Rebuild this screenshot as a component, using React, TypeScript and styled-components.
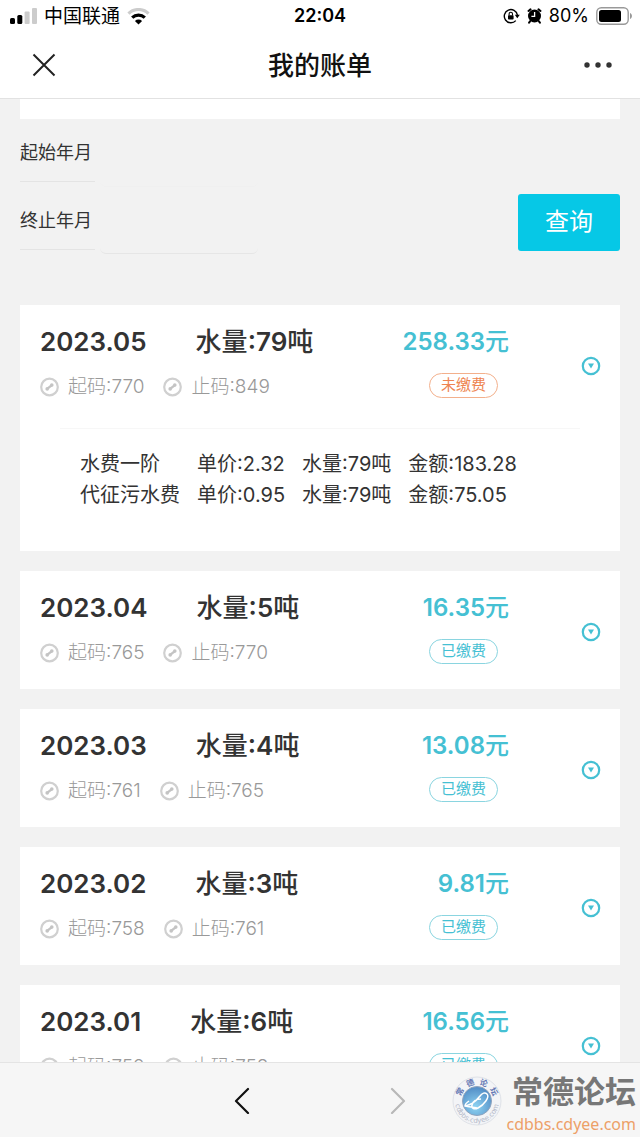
import React, { useState } from "react";
import styled, { createGlobalStyle } from "styled-components";

const GlobalStyle = createGlobalStyle`
  * { box-sizing: border-box; }
  body {
    margin: 0;
    background: #f2f2f2;
    color: #333;
    font-family: Inter, "Noto Sans CJK SC", sans-serif;
  }
  button, input { font: inherit; color: inherit; }
  button { margin: 0; padding: 0; border: 0; background: none; cursor: pointer; }
  svg { display: block; flex: none; }
`;

const Screen = styled.div`
  display: flex;
  flex-direction: column;
  height: 100vh;
`;

const StatusBar = styled.div`
  display: grid;
  grid-template-columns: 1fr auto 1fr;
  align-items: center;
  height: 32px;
  padding: 0 8px;
  background: #fff;
  color: #000;
`;

const StatusGroup = styled.div`
  display: flex;
  align-items: center;
  gap: 7px;
  padding-left: 2px;
`;

const StatusEnd = styled(StatusGroup)`
  justify-content: flex-end;
`;

const Carrier = styled.span`
  padding-top: 2px;
  font-size: 19px;
  line-height: 30px;
`;

const BatteryLevel = styled.span`
  font-size: 18px;
  line-height: 32px;
`;

const Clock = styled.time`
  font-size: 18px;
  font-weight: 600;
  line-height: 32px;
`;

const TitleBar = styled.header`
  display: grid;
  grid-template-columns: 1fr auto 1fr;
  align-items: center;
  height: 67px;
  padding: 0 28px;
  border-bottom: 1px solid #e2e2e2;
  background: #fff;
`;

const Title = styled.h1`
  margin: 0;
  padding-top: 2px;
  color: #111;
  font-size: 26px;
  font-weight: 500;
  line-height: 40px;
`;

const CloseButton = styled.button`
  justify-self: start;
  padding: 0 4px;
`;

const MoreButton = styled.button`
  justify-self: end;
`;

const Main = styled.main`
  flex: 1;
  min-height: 0;
  overflow: hidden;
  padding: 0 20px;
`;

const Strip = styled.div`
  height: 20px;
  background: #fff;
`;

const Query = styled.form`
  display: flex;
  align-items: flex-end;
  justify-content: space-between;
  margin-bottom: 50px;
`;

const Field = styled.div`
  display: flex;
  height: 68px;
`;

const FieldLabel = styled.label`
  width: 75px;
  height: 63px;
  margin-right: 5px;
  border-bottom: 1px solid #e4e4e4;
  font-size: 18px;
  line-height: 67px;
`;

const FieldInput = styled.input<{ $last?: boolean }>`
  width: 158px;
  height: ${(p) => (p.$last ? 67 : 68)}px;
  padding: 0 10px;
  border: 0;
  border-bottom: 1px solid ${(p) => (p.$last ? "#e6e6e6" : "#f0f0f0")};
  border-radius: 6px;
  background: #f2f2f2;
  font-size: 18px;
  outline: none;
`;

const QueryButton = styled.button`
  width: 102px;
  height: 57px;
  margin-bottom: 4px;
  padding-bottom: 6px;
  border-radius: 3px;
  background: #06c8e6;
  color: #fff;
  font-size: 24px;
`;

const BillList = styled.ul`
  display: flex;
  flex-direction: column;
  gap: 20px;
  margin: 0;
  padding: 0;
  list-style: none;
`;

const Card = styled.li`
  background: #fff;
`;

const Summary = styled.div`
  display: flex;
  height: 118px;
  padding: 17px 19px 0 20px;
`;

const Usage = styled.div`
  flex: 1;
`;

const Heading = styled.div`
  display: flex;
  gap: 49px;
  font-size: 26px;
  font-weight: 600;
  line-height: 40px;
`;

const Hanzi = styled.span`
  font-weight: 500;
`;

const Readings = styled.div`
  display: flex;
  gap: 19px;
  margin-top: 12px;
  color: #999;
  font-size: 19px;
  font-weight: 300;
  line-height: 26px;
`;

const Reading = styled.span`
  display: flex;
  align-items: center;
  gap: 8px;
`;

const Payment = styled.div`
  display: flex;
  flex-direction: column;
  align-items: flex-end;
  margin-right: 72px;
`;

const Amount = styled.strong`
  color: #45c0d3;
  font-size: 24px;
  font-weight: 600;
  line-height: 40px;
`;

const Badge = styled.span<{ $paid: boolean }>`
  height: 25px;
  margin: 11px 11px 0 0;
  padding: 0 11px;
  border: 1px solid ${(p) => (p.$paid ? "#8ad5e0" : "#f3b08c")};
  border-radius: 13px;
  color: ${(p) => (p.$paid ? "#45c0d3" : "#ee8450")};
  font-size: 15px;
  line-height: 22px;
`;

const Toggle = styled.button`
  align-self: center;
  margin-top: -14px;
`;

const Detail = styled.div`
  margin: 5px 40px 0;
  padding: 20px 20px 40px;
  border-top: 1px solid #f7f7f7;
`;

const DetailTable = styled.table`
  border-collapse: collapse;
  font-size: 20px;
  line-height: 31px;

  td {
    padding: 0 17px 0 0;
    white-space: nowrap;
  }
`;

const BottomBar = styled.footer`
  position: relative;
  display: flex;
  align-items: center;
  justify-content: center;
  gap: 140px;
  height: 75px;
  border-top: 1px solid #e4e4e4;
  background: #f6f6f6;
`;

const Watermark = styled.div`
  position: absolute;
  right: 4px;
  bottom: 2px;
  display: flex;
  align-items: center;
  gap: 5px;
`;

const WatermarkText = styled.div`
  display: flex;
  flex-direction: column;
  align-items: flex-end;
`;

const ForumName = styled.span`
  color: #777;
  font-family: "Noto Sans CJK SC", sans-serif;
  font-size: 31px;
  font-weight: 700;
  line-height: 46px;
`;

const ForumUrl = styled.span`
  color: #eda068;
  font-family: "Noto Sans", sans-serif;
  font-size: 16px;
  line-height: 22px;
`;

const SignalIcon = () => (
  <svg width="27" height="16" viewBox="0 0 27 16" aria-hidden="true">
    <rect x="0" y="10" width="5" height="6" rx="1.5" fill="#000" />
    <rect x="7.3" y="7" width="5" height="9" rx="1.5" fill="#000" />
    <rect x="14.6" y="3.5" width="5" height="12.5" rx="1" fill="#ccc" />
    <rect x="22" y="0" width="5" height="16" rx="1" fill="#ccc" />
  </svg>
);

const WifiIcon = () => (
  <svg width="23" height="17" viewBox="0 0 23 17" fill="none" aria-hidden="true">
    <path d="M1.5 5.6a14.3 14.3 0 0 1 20 0" stroke="#ccc" strokeWidth="3.2" />
    <path d="M5.2 9.7a9 9 0 0 1 12.6 0" stroke="#000" strokeWidth="3.2" />
    <path d="M11.5 16.6 7.9 12.9a5.2 5.2 0 0 1 7.2 0Z" fill="#000" />
  </svg>
);

const RotationLockIcon = () => (
  <svg width="17" height="16" viewBox="0 0 17 16" fill="none" aria-hidden="true">
    <path d="M12.8 12.6A6.6 6.6 0 1 1 14.4 7" stroke="#000" strokeWidth="1.4" />
    <path d="M11.8 6.8h5l-2.5 3.4Z" fill="#000" />
    <rect x="5" y="7.2" width="5.6" height="4.4" rx=".8" fill="#000" />
    <path d="M6.1 7.4V6a1.7 1.7 0 0 1 3.4 0v1.4" stroke="#000" strokeWidth="1.1" />
  </svg>
);

const AlarmIcon = () => (
  <svg width="15" height="16" viewBox="0 0 15 16" fill="none" aria-hidden="true">
    <circle cx="7.5" cy="8" r="6.5" fill="#000" />
    <path d="M1.5 3 3.5 1.4M13.5 3l-2-1.6M3 13.4l-.9 1.2M12 13.4l.9 1.2" stroke="#000" strokeWidth="2" strokeLinecap="round" />
    <path d="M7.6 4v4.4H4.4" stroke="#fff" strokeWidth="1.3" />
  </svg>
);

const BatteryIcon = () => (
  <svg width="36" height="18" viewBox="0 0 36 18" fill="none" aria-hidden="true">
    <rect x=".8" y=".8" width="31.4" height="16.4" rx="4.5" stroke="#999" strokeWidth="1.4" />
    <rect x="3" y="3" width="22" height="12" rx="2.5" fill="#000" />
    <path d="M34 6c2.6.8 2.6 5.2 0 6Z" fill="#999" />
  </svg>
);

const CloseIcon = () => (
  <svg width="24" height="24" viewBox="0 0 24 24" fill="none" aria-hidden="true">
    <path d="m1.5 1.5 21 21M22.5 1.5l-21 21" stroke="#222" strokeWidth="2" />
  </svg>
);

const MoreIcon = () => (
  <svg width="28" height="8" viewBox="0 0 28 8" fill="#333" aria-hidden="true">
    <circle cx="3" cy="4" r="2.7" />
    <circle cx="14" cy="4" r="2.7" />
    <circle cx="25" cy="4" r="2.7" />
  </svg>
);

const MeterIcon = () => (
  <svg width="20" height="20" viewBox="0 0 20 20" fill="none" aria-hidden="true">
    <circle cx="9.5" cy="10" r="8.3" stroke="#d0d0d0" strokeWidth="2.2" />
    <path d="m7.5 11.7 4-3.4" stroke="#c4c4c4" strokeWidth="2.4" />
    <circle cx="7.2" cy="11.9" r="1.8" fill="#c4c4c4" />
    <circle cx="11.8" cy="8.1" r="1.8" fill="#c4c4c4" />
  </svg>
);

const ExpandIcon = () => (
  <svg width="20" height="20" viewBox="0 0 20 20" fill="none" aria-hidden="true">
    <circle cx="10" cy="10" r="8.2" stroke="#45c0d3" strokeWidth="2.2" />
    <path d="M7 7.6h6l-3 5Z" fill="#45c0d3" />
  </svg>
);

const Chevron = ({ forward }: { forward?: boolean }) => (
  <svg width="16" height="28" viewBox="0 0 16 28" fill="none" aria-hidden="true">
    <path
      d={forward ? "m2 3 12 12L2 27" : "M14 3 2 15l12 12"}
      stroke={forward ? "#b8b8b8" : "#111"}
      strokeWidth="2.2"
      strokeLinecap="round"
      strokeLinejoin="round"
    />
  </svg>
);

const ForumSeal = () => (
  <svg width="50" height="50" viewBox="0 0 50 50" aria-hidden="true">
    <defs>
      <radialGradient id="globe" cx="45%" cy="70%" r="65%">
        <stop offset="0" stopColor="#8fd4f2" />
        <stop offset="1" stopColor="#5590c8" />
      </radialGradient>
      <path id="sealTop" d="M8.5 25a16.5 16.5 0 0 1 33 0" />
      <path id="sealBottom" d="M3 25a22 22 0 0 0 44 0" />
    </defs>
    <circle cx="25" cy="25" r="24" fill="#f3f4f7" stroke="#dfe2e8" />
    <circle cx="25" cy="25" r="14.5" fill="url(#globe)" stroke="#8fa3bd" />
    <path
      d="M13 30c4-1 9-2 15-10 2-3 5-4 7-2 3 3-3 11-9 14-4 2-7 0-6-3 1-4 5-6 9-6M17 25c-3 2-4 4-4 5 4 1 8 1 12 2"
      fill="none"
      stroke="#fff"
      strokeWidth="1.5"
    />
    <text fill="#6679b4" fontFamily="Noto Sans CJK SC, sans-serif" fontSize="8" fontWeight="700">
      <textPath href="#sealTop" startOffset="50%" textAnchor="middle">常&#160;&#160;德&#160;&#160;论&#160;&#160;坛</textPath>
    </text>
    <text fill="#b3b9c8" fontFamily="DejaVu Sans, sans-serif" fontSize="7">
      <textPath href="#sealBottom" startOffset="50%" textAnchor="middle">cdbbs.cdyee.com</textPath>
    </text>
  </svg>
);

type Charge = { name: string; price: string; volume: string; total: string };
type Bill = {
  month: string;
  volume: string;
  start: string;
  end: string;
  amount: string;
  paid: boolean;
  charges: Charge[];
};

const bills: Bill[] = [
  {
    month: "2023.05", volume: "79", start: "770", end: "849", amount: "258.33", paid: false,
    charges: [
      { name: "水费一阶", price: "2.32", volume: "79", total: "183.28" },
      { name: "代征污水费", price: "0.95", volume: "79", total: "75.05" },
    ],
  },
  { month: "2023.04", volume: "5", start: "765", end: "770", amount: "16.35", paid: true, charges: [] },
  { month: "2023.03", volume: "4", start: "761", end: "765", amount: "13.08", paid: true, charges: [] },
  { month: "2023.02", volume: "3", start: "758", end: "761", amount: "9.81", paid: true, charges: [] },
  { month: "2023.01", volume: "6", start: "752", end: "758", amount: "16.56", paid: true, charges: [] },
];

const BillCard = ({ bill }: { bill: Bill }) => {
  const [open, setOpen] = useState(bill.charges.length > 0);
  return (
    <Card>
      <Summary>
        <Usage>
          <Heading>
            <span>{bill.month}</span>
            <span><Hanzi>水量</Hanzi>:{bill.volume}<Hanzi>吨</Hanzi></span>
          </Heading>
          <Readings>
            <Reading><MeterIcon />起码:{bill.start}</Reading>
            <Reading><MeterIcon />止码:{bill.end}</Reading>
          </Readings>
        </Usage>
        <Payment>
          <Amount>{bill.amount}<Hanzi>元</Hanzi></Amount>
          <Badge $paid={bill.paid}>{bill.paid ? "已缴费" : "未缴费"}</Badge>
        </Payment>
        <Toggle type="button" aria-label="明细" aria-expanded={open} onClick={() => setOpen(!open)}>
          <ExpandIcon />
        </Toggle>
      </Summary>
      {open && bill.charges.length > 0 && (
        <Detail>
          <DetailTable>
            <tbody>
              {bill.charges.map((c) => (
                <tr key={c.name}>
                  <td>{c.name}</td>
                  <td>单价:{c.price}</td>
                  <td>水量:{c.volume}吨</td>
                  <td>金额:{c.total}</td>
                </tr>
              ))}
            </tbody>
          </DetailTable>
        </Detail>
      )}
    </Card>
  );
};

export default function App() {
  return (
    <Screen>
      <GlobalStyle />
      <StatusBar>
        <StatusGroup><SignalIcon /><Carrier>中国联通</Carrier><WifiIcon /></StatusGroup>
        <Clock>22:04</Clock>
        <StatusEnd><RotationLockIcon /><AlarmIcon /><BatteryLevel>80%</BatteryLevel><BatteryIcon /></StatusEnd>
      </StatusBar>
      <TitleBar>
        <CloseButton type="button" aria-label="关闭"><CloseIcon /></CloseButton>
        <Title>我的账单</Title>
        <MoreButton type="button" aria-label="更多"><MoreIcon /></MoreButton>
      </TitleBar>
      <Main>
        <Strip />
        <Query onSubmit={(e) => e.preventDefault()}>
          <div>
            <Field>
              <FieldLabel htmlFor="start">起始年月</FieldLabel>
              <FieldInput id="start" type="text" />
            </Field>
            <Field>
              <FieldLabel htmlFor="end">终止年月</FieldLabel>
              <FieldInput id="end" type="text" $last />
            </Field>
          </div>
          <QueryButton type="submit">查询</QueryButton>
        </Query>
        <BillList>
          {bills.map((b) => <BillCard key={b.month} bill={b} />)}
        </BillList>
      </Main>
      <BottomBar>
        <button type="button" aria-label="后退"><Chevron /></button>
        <button type="button" aria-label="前进"><Chevron forward /></button>
        <Watermark>
          <ForumSeal />
          <WatermarkText>
            <ForumName>常德论坛</ForumName>
            <ForumUrl>cdbbs.cdyee.com</ForumUrl>
          </WatermarkText>
        </Watermark>
      </BottomBar>
    </Screen>
  );
}
